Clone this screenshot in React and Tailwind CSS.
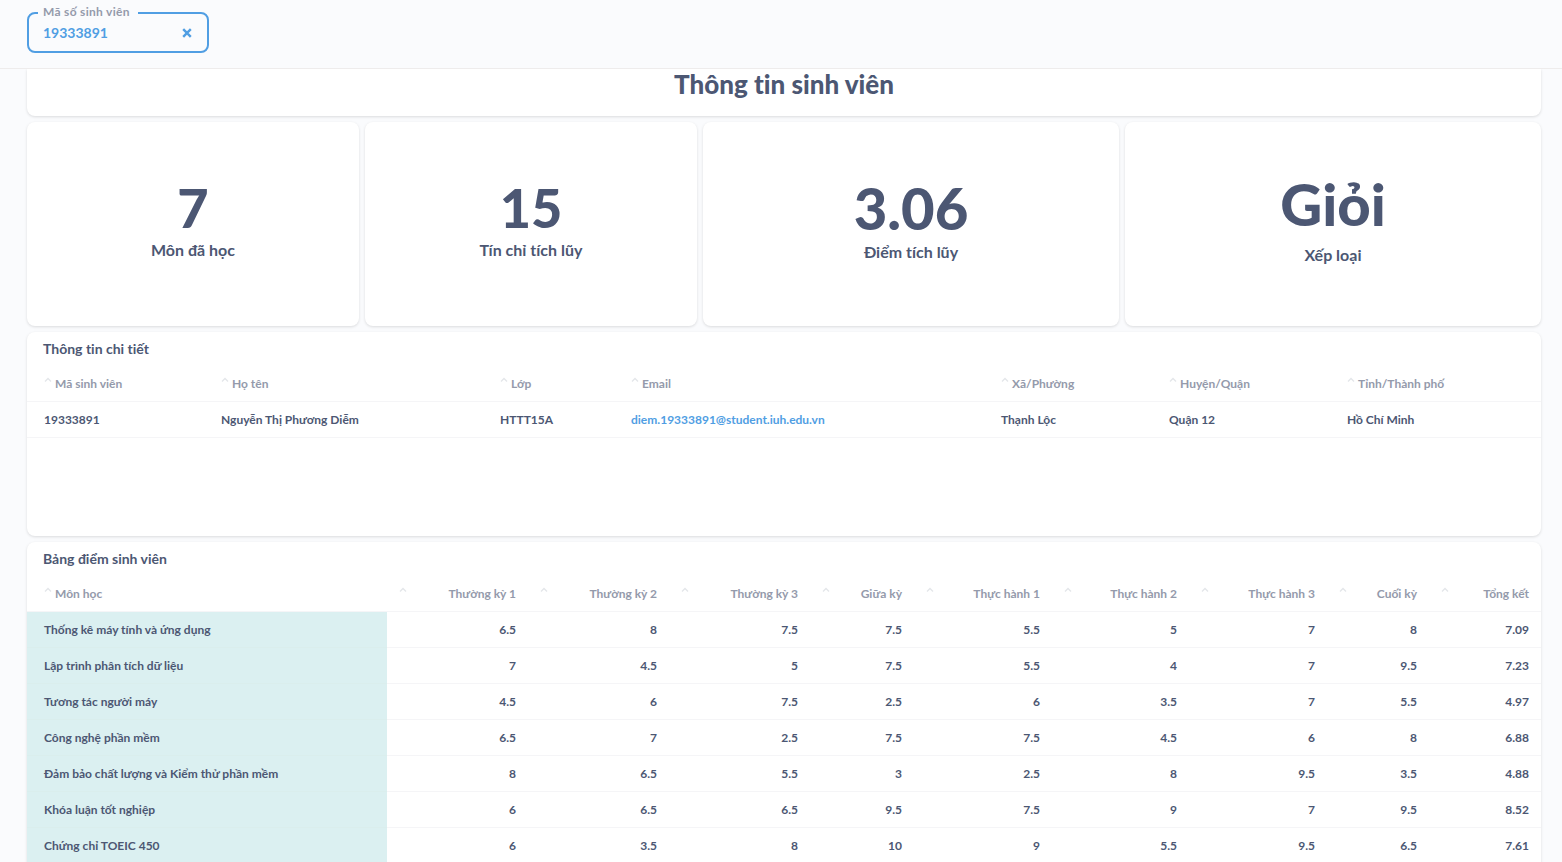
const STATS = [
  { value: "7", label: "Môn đã học", size: "text-[54px] leading-[64px]" },
  { value: "15", label: "Tín chỉ tích lũy", size: "text-[54px] leading-[64px]" },
  { value: "3.06", label: "Điểm tích lũy", size: "text-[58px] leading-[68px]" },
  { value: "Giỏi", label: "Xếp loại", size: "pb-2 text-[58px] leading-[66px]" },
];

const DETAIL_COLUMNS = [
  { name: "Mã sinh viên", width: "w-[177px]" },
  { name: "Họ tên", width: "w-[279px]" },
  { name: "Lớp", width: "w-[131px]" },
  { name: "Email", width: "w-[370px]" },
  { name: "Xã/Phường", width: "w-[168px]" },
  { name: "Huyện/Quận", width: "w-[178px]" },
  { name: "Tỉnh/Thành phố", width: "w-[211px]" },
];

const STUDENT = [
  "19333891",
  "Nguyễn Thị Phương Diễm",
  "HTTT15A",
  "diem.19333891@student.iuh.edu.vn",
  "Thạnh Lộc",
  "Quận 12",
  "Hồ Chí Minh",
];

const GRADE_COLUMNS = [
  { name: "Thường kỳ 1", width: "w-[141px]" },
  { name: "Thường kỳ 2", width: "w-[141px]" },
  { name: "Thường kỳ 3", width: "w-[141px]" },
  { name: "Giữa kỳ", width: "w-[104px]" },
  { name: "Thực hành 1", width: "w-[138px]" },
  { name: "Thực hành 2", width: "w-[137px]" },
  { name: "Thực hành 3", width: "w-[138px]" },
  { name: "Cuối kỳ", width: "w-[102px]" },
  { name: "Tổng kết", width: "w-[112px]" },
];

const GRADES = [
  ["Thống kê máy tính và ứng dụng", 6.5, 8, 7.5, 7.5, 5.5, 5, 7, 8, 7.09],
  ["Lập trình phân tích dữ liệu", 7, 4.5, 5, 7.5, 5.5, 4, 7, 9.5, 7.23],
  ["Tương tác người máy", 4.5, 6, 7.5, 2.5, 6, 3.5, 7, 5.5, 4.97],
  ["Công nghệ phần mềm", 6.5, 7, 2.5, 7.5, 7.5, 4.5, 6, 8, 6.88],
  ["Đảm bảo chất lượng và Kiểm thử phần mềm", 8, 6.5, 5.5, 3, 2.5, 8, 9.5, 3.5, 4.88],
  ["Khóa luận tốt nghiệp", 6, 6.5, 6.5, 9.5, 7.5, 9, 7, 9.5, 8.52],
  ["Chứng chỉ TOEIC 450", 6, 3.5, 8, 10, 9, 5.5, 9.5, 6.5, 7.61],
];

function SortIcon() {
  return (
    <svg className="mb-2 h-2 w-2 shrink-0" viewBox="0 0 8 8" fill="none" stroke="#e4e6ea" strokeWidth="1.4" aria-hidden="true">
      <path d="M1 5.5 4 2.5 7 5.5" />
    </svg>
  );
}

function Card({ className = "", children }) {
  return (
    <section className={`overflow-hidden bg-white shadow-[0_1px_3px_rgba(0,0,0,0.13)] ${className}`}>
      {children}
    </section>
  );
}

function CardTitle({ children }) {
  return <h2 className="px-4 pt-[7px] pb-4 text-sm leading-5 font-bold">{children}</h2>;
}

function Filter() {
  return (
    <div className="relative flex h-[41px] w-[182px] items-center rounded-lg border-2 border-[#509ee3] pr-[14px] pl-[14px] text-[#509ee3]">
      <label htmlFor="student-id" className="absolute -top-3 left-[9px] bg-[#fafbfd] pr-2 pl-[5px] text-xs leading-5 font-bold tracking-wide whitespace-nowrap text-[#949aab]">
        Mã số sinh viên
      </label>
      <input id="student-id" type="text" defaultValue="19333891" className="w-full min-w-0 bg-transparent text-sm leading-5 font-bold outline-none" />
      <button type="button" aria-label="Xóa" className="shrink-0">
        <svg className="h-3 w-3" viewBox="0 0 12 12" fill="none" stroke="currentColor" strokeWidth="2.4" aria-hidden="true">
          <path d="M2.2 2.2 9.8 9.8M9.8 2.2 2.2 9.8" />
        </svg>
      </button>
    </div>
  );
}

export default function App() {
  return (
    <div className="flex h-screen flex-col overflow-hidden bg-[#fafbfd] font-[Lato,'Liberation_Serif',serif] text-[#4c5773] [font-variant-ligatures:none]">
      <header className="shrink-0 border-b border-[#eeecec] pt-3 pr-[21px] pb-[15px] pl-[27px]">
        <Filter />
      </header>
      <main className="flex min-h-0 flex-1 flex-col gap-[6px] overflow-y-auto pr-[21px] pl-[27px] [scrollbar-width:none]">
        <Card className="shrink-0 rounded-b-lg pb-[17px]">
          <h1 className="text-center text-[26px] leading-[30px] font-black">Thông tin sinh viên</h1>
        </Card>

        <div className="grid shrink-0 grid-cols-[332fr_332fr_416fr_416fr] gap-[6px]">
          {STATS.map((s) => (
            <Card key={s.label} className="flex h-[204px] flex-col items-center justify-center rounded-lg pb-3">
              <p className={`font-black ${s.size}`}>{s.value}</p>
              <h2 className="text-base leading-5 font-bold">{s.label}</h2>
            </Card>
          ))}
        </div>

        <Card className="h-[204px] shrink-0 rounded-lg">
          <CardTitle>Thông tin chi tiết</CardTitle>
          <table className="w-full table-fixed text-left text-xs font-bold">
            <thead>
              <tr className="h-[26px] border-b border-[#f5f5f7] text-[#949aab]">
                {DETAIL_COLUMNS.map((c) => (
                  <th key={c.name} scope="col" className={`pb-2 pl-[17px] ${c.width}`}>
                    <div className="flex items-center gap-[3px] whitespace-nowrap">
                      <SortIcon />
                      {c.name}
                    </div>
                  </th>
                ))}
              </tr>
            </thead>
            <tbody>
              <tr className="h-9 border-b border-[#f5f5f7]">
                {STUDENT.map((v) => (
                  <td key={v} className="pt-0.5 pl-[17px] whitespace-nowrap">
                    {v.includes("@") ? <a href={`mailto:${v}`} className="text-[#509ee3]">{v}</a> : v}
                  </td>
                ))}
              </tr>
            </tbody>
          </table>
        </Card>

        <Card className="shrink-0 rounded-t-lg">
          <CardTitle>Bảng điểm sinh viên</CardTitle>
          <table className="w-full table-fixed text-right text-xs font-bold">
            <thead>
              <tr className="h-[26px] border-b border-[#f5f5f7] text-[#949aab]">
                <th scope="col" className="w-[360px] pb-2 pl-[17px]">
                  <div className="flex items-center gap-[3px]">
                    <SortIcon />
                    Môn học
                  </div>
                </th>
                {GRADE_COLUMNS.map((c) => (
                  <th key={c.name} scope="col" className={`pr-3 pb-2 pl-3 ${c.width}`}>
                    <div className="flex items-center justify-between whitespace-nowrap">
                      <SortIcon />
                      {c.name}
                    </div>
                  </th>
                ))}
              </tr>
            </thead>
            <tbody>
              {GRADES.map(([subject, ...marks]) => (
                <tr key={subject} className="h-9 border-b border-[#f5f5f7]">
                  <th scope="row" className="border-b border-[#daeeed] bg-[#dbf0f1] pt-0.5 pl-[17px] text-left whitespace-nowrap">{subject}</th>
                  {marks.map((m, i) => (
                    <td key={i} className="pt-0.5 pr-3">{m}</td>
                  ))}
                </tr>
              ))}
            </tbody>
          </table>
        </Card>
      </main>
    </div>
  );
}
